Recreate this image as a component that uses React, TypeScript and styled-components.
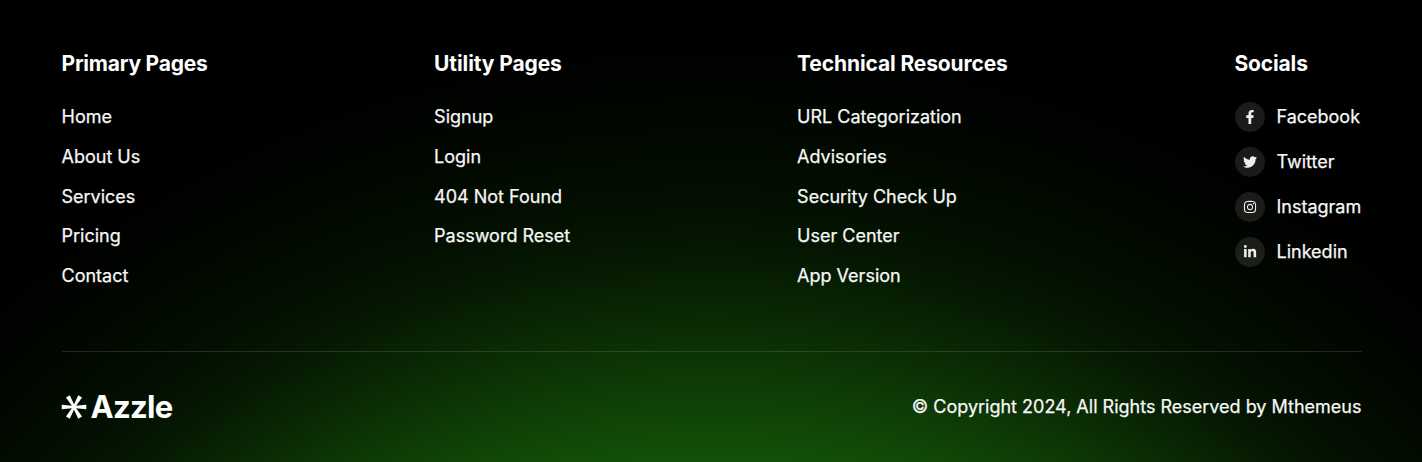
import React from "react";
import styled, { createGlobalStyle } from "styled-components";
import { FaFacebookF, FaTwitter, FaInstagram, FaLinkedinIn } from "react-icons/fa";

const GlobalStyle = createGlobalStyle`
  *, *::before, *::after { box-sizing: border-box; }
  body { margin: 0; background: #000; font-family: Inter, "Liberation Sans", sans-serif; }
`;

const Footer = styled.footer`
  height: 462px;
  padding: 49px 60.5px 0 61.5px;
  color: #f7f7f7;
  background: radial-gradient(circle 1200px at 50% 1150px, #125207 688px, #0f4206 745px, #0c3205 799px, #092504 845px, #051902 895px, #031001 945px, #020a00 1000px, #010500 1050px, #000100 1110px, #000 1150px) #000;
  overflow: hidden;
`;

const Columns = styled.div`
  display: grid;
  grid-template-columns: 372.6px 363px 437.4px 1fr;
  height: 302px;
`;

const Heading = styled.h2<{ $tracking: number }>`
  margin: 0 0 24px;
  font-size: 21px;
  line-height: 29px;
  font-weight: 700;
  letter-spacing: ${(p) => p.$tracking}px;
  white-space: nowrap;
  color: #fff;
`;

const List = styled.ul<{ $gap: number }>`
  list-style: none;
  margin: 0;
  padding: 0;
  display: flex;
  flex-direction: column;
  gap: ${(p) => p.$gap}px;
`;

const Link = styled.a`
  display: flex;
  align-items: center;
  gap: 11.7px;
  height: 30px;
  font-size: 18px;
  font-weight: 400;
  -webkit-text-stroke: 0.25px currentColor;
  line-height: 30px;
  color: inherit;
  white-space: nowrap;
`;

const Badge = styled.span`
  display: flex;
  align-items: center;
  justify-content: center;
  width: 30px;
  height: 30px;
  margin-left: 0.3px;
  border-radius: 50%;
  background: rgba(255, 255, 255, 0.1);
  color: #f3efe7;
  font-size: 14px;
`;

const Bottom = styled.div`
  display: flex;
  align-items: center;
  justify-content: space-between;
  height: 111px;
  border-top: 1px solid rgba(255, 255, 255, 0.12);
`;

const Logo = styled.div`
  display: flex;
  align-items: center;
  gap: 5px;
  color: #fff;
  font-size: 31px;
  line-height: 38px;
  font-weight: 700;
  letter-spacing: -0.7px;
`;

const Copyright = styled.p`
  margin: 0;
  font-size: 18px;
  -webkit-text-stroke: 0.25px currentColor;
  line-height: 30px;
`;

const columns = [
  { title: "Primary Pages", tracking: -0.22, links: ["Home", "About Us", "Services", "Pricing", "Contact"] },
  { title: "Utility Pages", tracking: -0.1, links: ["Signup", "Login", "404 Not Found", "Password Reset"] },
  {
    title: "Technical Resources",
    tracking: -0.12,
    links: ["URL Categorization", "Advisories", "Security Check Up", "User Center", "App Version"],
  },
];

const socials = [
  { name: "Facebook", Icon: FaFacebookF },
  { name: "Twitter", Icon: FaTwitter },
  { name: "Instagram", Icon: FaInstagram },
  { name: "Linkedin", Icon: FaLinkedinIn },
];

const Star = () => (
  <svg width="24" height="24" viewBox="0 0 24 24" fill="currentColor" overflow="visible">
    {[0, 60, 120, 180, 240, 300].map((angle) => (
      <path key={angle} d="M11 11L24.3 9.8V14.2L11 13Z" transform={`rotate(${angle} 12 12)`} />
    ))}
  </svg>
);

export default function App() {
  return (
    <>
      <GlobalStyle />
      <Footer>
        <Columns>
          {columns.map((column) => (
            <section key={column.title}>
              <Heading $tracking={column.tracking}>{column.title}</Heading>
              <List $gap={9.75}>
                {column.links.map((link) => (
                  <li key={link}>
                    <Link>{link}</Link>
                  </li>
                ))}
              </List>
            </section>
          ))}
          <section>
            <Heading $tracking={-0.15}>Socials</Heading>
            <List $gap={15}>
              {socials.map(({ name, Icon }) => (
                <li key={name}>
                  <Link>
                    <Badge>
                      <Icon />
                    </Badge>
                    {name}
                  </Link>
                </li>
              ))}
            </List>
          </section>
        </Columns>
        <Bottom>
          <Logo>
            <Star />
            Azzle
          </Logo>
          <Copyright>© Copyright 2024, All Rights Reserved by Mthemeus</Copyright>
        </Bottom>
      </Footer>
    </>
  );
}
